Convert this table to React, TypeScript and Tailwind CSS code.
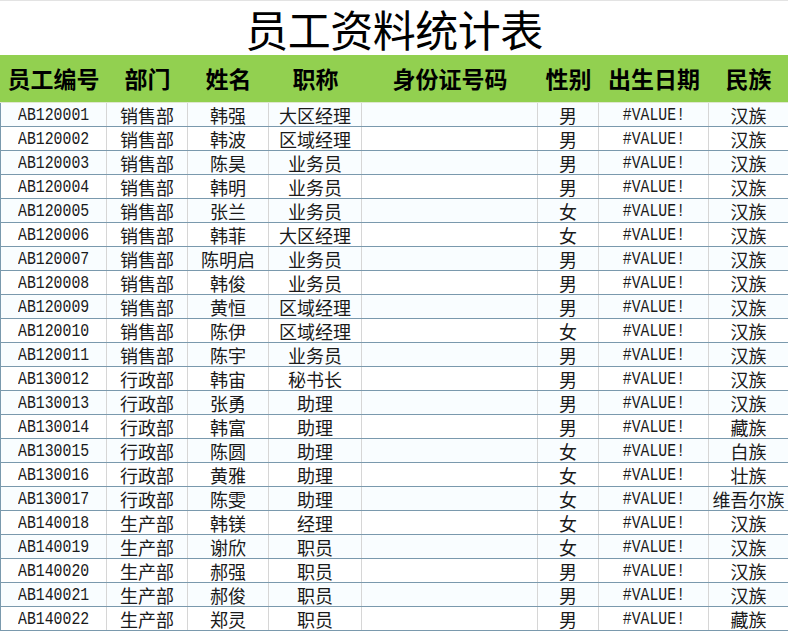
const rows: [string, string, string, string, string, string][] = [
  ["AB120001", "销售部", "韩强", "大区经理", "男", "汉族"],
  ["AB120002", "销售部", "韩波", "区域经理", "男", "汉族"],
  ["AB120003", "销售部", "陈昊", "业务员", "男", "汉族"],
  ["AB120004", "销售部", "韩明", "业务员", "男", "汉族"],
  ["AB120005", "销售部", "张兰", "业务员", "女", "汉族"],
  ["AB120006", "销售部", "韩菲", "大区经理", "女", "汉族"],
  ["AB120007", "销售部", "陈明启", "业务员", "男", "汉族"],
  ["AB120008", "销售部", "韩俊", "业务员", "男", "汉族"],
  ["AB120009", "销售部", "黄恒", "区域经理", "男", "汉族"],
  ["AB120010", "销售部", "陈伊", "区域经理", "女", "汉族"],
  ["AB120011", "销售部", "陈宇", "业务员", "男", "汉族"],
  ["AB130012", "行政部", "韩宙", "秘书长", "男", "汉族"],
  ["AB130013", "行政部", "张勇", "助理", "男", "汉族"],
  ["AB130014", "行政部", "韩富", "助理", "男", "藏族"],
  ["AB130015", "行政部", "陈圆", "助理", "女", "白族"],
  ["AB130016", "行政部", "黄雅", "助理", "女", "壮族"],
  ["AB130017", "行政部", "陈雯", "助理", "女", "维吾尔族"],
  ["AB140018", "生产部", "韩镁", "经理", "女", "汉族"],
  ["AB140019", "生产部", "谢欣", "职员", "女", "汉族"],
  ["AB140020", "生产部", "郝强", "职员", "男", "汉族"],
  ["AB140021", "生产部", "郝俊", "职员", "男", "汉族"],
  ["AB140022", "生产部", "郑灵", "职员", "男", "藏族"],
];

const cjk = { fontFamily: '"Noto Sans CJK SC", sans-serif' };
const mono = { fontFamily: '"Liberation Mono", monospace' };

// column widths (include the 1px right border)
const cols = ["w-[107px]", "w-[81px]", "w-[81px]", "w-[93px]", "w-[176px]", "w-[61px]", "w-[110px]", "w-[79px]"];
const heads = ["员工编号", "部门", "姓名", "职称", "身份证号码", "性别", "出生日期", "民族"];

const Latin = ({ children }: { children: string }) => (
  <span className="inline-block scale-x-[0.78] text-[19px] leading-none mt-[1px]" style={mono}>
    {children}
  </span>
);

export default function App() {
  return (
    <div className="w-[788px] h-[631px] overflow-hidden bg-white text-[#1a1a1a]" style={cjk}>
      {/* 标题 */}
      <div className="h-[55px] border-t border-[#e3e3e3] flex items-center justify-center">
        <h1 className="text-[43px] leading-[54px] text-black tracking-[-0.5px]">员工资料统计表</h1>
      </div>

      {/* 表头 */}
      <div className="flex h-[48px] bg-[#92d050] border-b border-[#dfe8d0]">
        {heads.map((h, i) => (
          <div key={i} className={`${cols[i]} shrink-0 flex items-center justify-center text-[23px] font-bold text-black leading-none`}>
            {h}
          </div>
        ))}
      </div>

      {/* 数据 */}
      {rows.map((r, idx) => (
        <div key={idx} className={`flex h-[24px] border-b border-[#7a99ad] ${idx % 2 === 0 ? "bg-[#f9fdff]" : "bg-white"}`}>
          <div className={`${cols[0]} shrink-0 border-l border-r border-l-[#7a99ad] border-r-[#d6d6d6] flex items-center justify-center`}>
            <Latin>{r[0]}</Latin>
          </div>
          <div className={`${cols[1]} shrink-0 border-r border-[#d6d6d6] flex items-center justify-center text-[18px] leading-none`}>{r[1]}</div>
          <div className={`${cols[2]} shrink-0 border-r border-[#d6d6d6] flex items-center justify-center text-[18px] leading-none`}>{r[2]}</div>
          <div className={`${cols[3]} shrink-0 border-r border-[#d6d6d6] flex items-center justify-center text-[18px] leading-none`}>{r[3]}</div>
          <div className={`${cols[4]} shrink-0 border-r border-[#d6d6d6]`} />
          <div className={`${cols[5]} shrink-0 border-r border-[#d6d6d6] flex items-center justify-center text-[18px] leading-none`}>{r[4]}</div>
          <div className={`${cols[6]} shrink-0 border-r border-[#d6d6d6] flex items-center justify-center`}>
            <Latin>#VALUE!</Latin>
          </div>
          <div className={`${cols[7]} shrink-0 flex items-center justify-center text-[18px] leading-none`}>{r[5]}</div>
        </div>
      ))}
    </div>
  );
}
